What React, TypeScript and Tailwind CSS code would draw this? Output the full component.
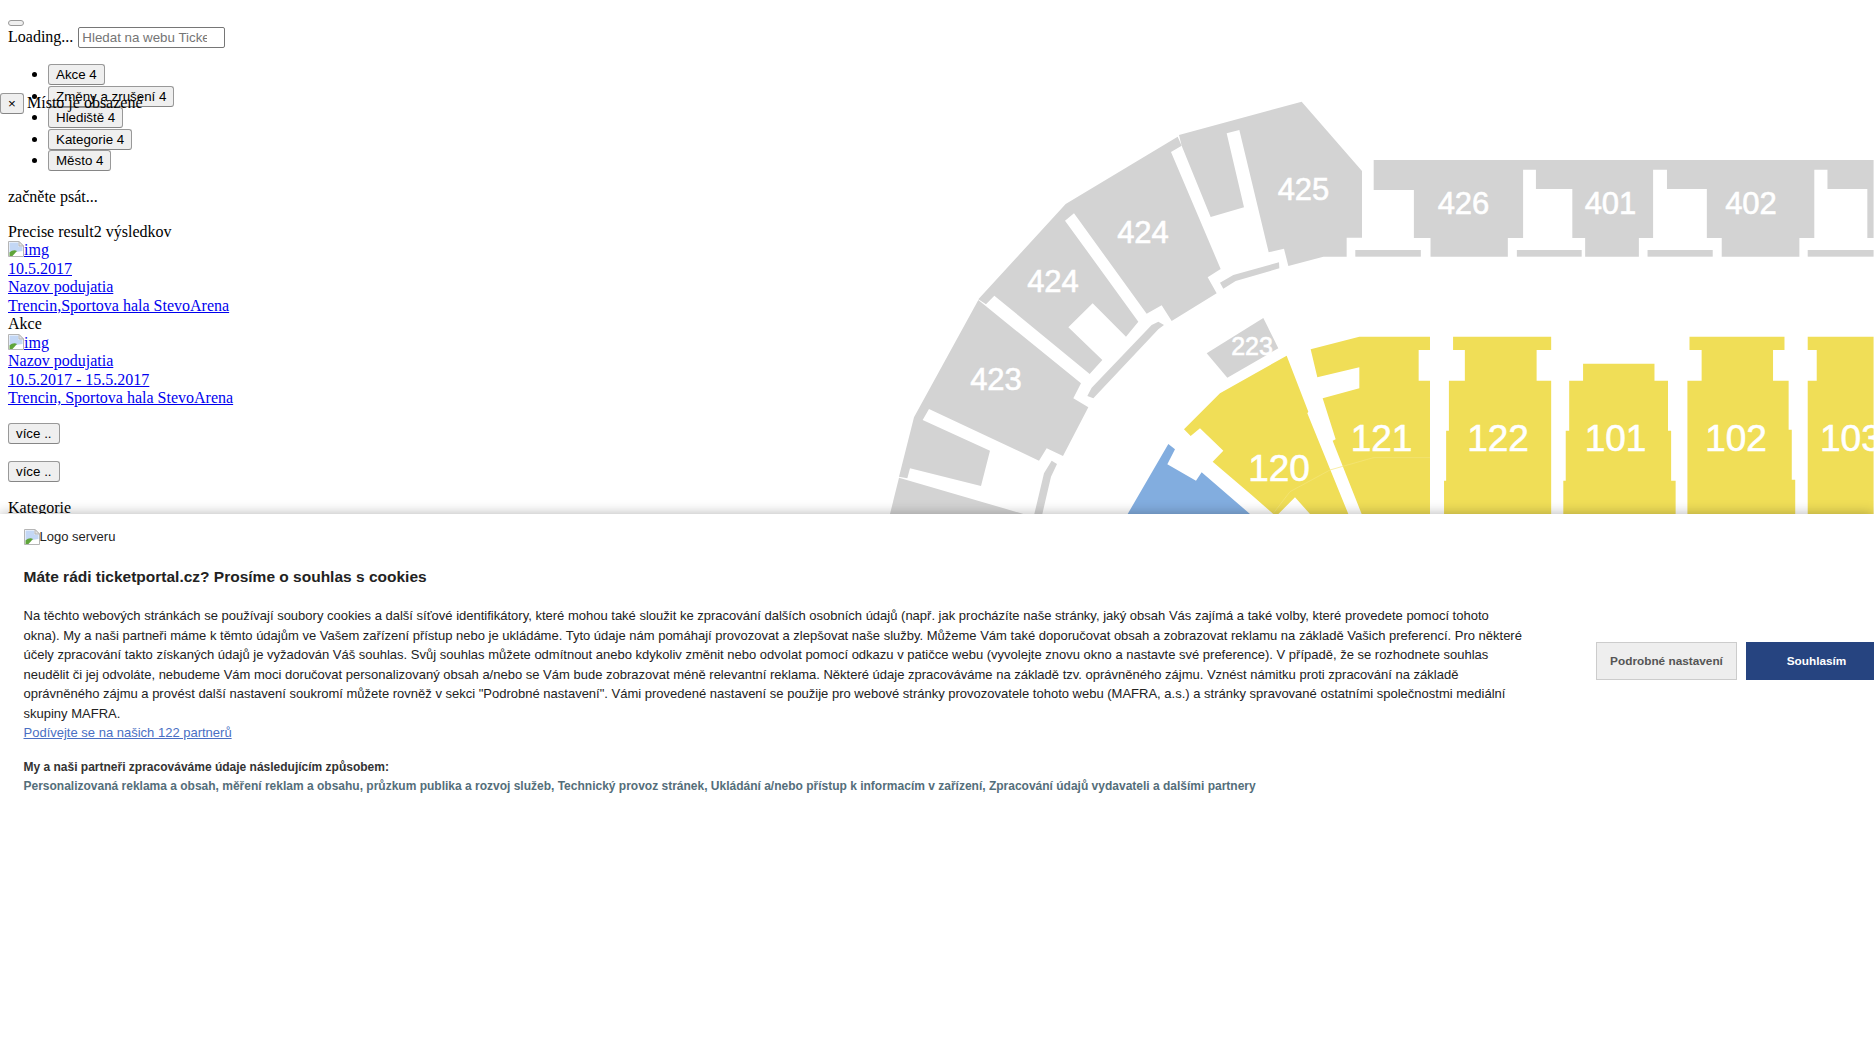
const GRAY = "#d3d3d3";
const YELLOW = "#f0de57";
const BLUE = "#82addf";

const BrokenImg = () => (
  <svg width="16" height="16" viewBox="0 0 16 16" className="inline-block align-top shrink-0">
    <path d="M0.5 0.5H11L15.5 5V15.5H0.5Z" fill="#fff" stroke="#b5b5b5" />
    <path d="M1.5 1.5H10.5V5.5H14.5V10L1.5 12Z" fill="#c3d7f5" />
    <path d="M1.5 15V11.5C4 9 7 8.5 9 10L4.5 15Z" fill="#5fa53a" />
    <path d="M11 0.5V5H15.5Z" fill="#e4e4e4" stroke="#b5b5b5" />
  </svg>
);

const Btn = ({ children, className = "" }: { children: React.ReactNode; className?: string }) => (
  <button className={`block h-[21px] px-[7px] rounded-[3px] border border-[#999999] border-b-[#868686] bg-[#efefef] text-black text-[13.33px] leading-[19px] font-['Liberation_Sans',Arial,sans-serif] whitespace-nowrap ${className}`}>
    {children}
  </button>
);

const Label = ({ x, y, size, children, anchor = "middle" }: { x: number; y: number; size: number; children: string; anchor?: "middle" | "start" }) => (
  <text x={x} y={y} fontSize={size} fill="#fff" stroke="#fff" strokeWidth="0.6" textAnchor={anchor} fontFamily="'Liberation Sans', Arial, sans-serif">
    {children}
  </text>
);

const ArenaMap = () => (
  <svg viewBox="880 90 994 424" className="absolute left-[880px] top-[90px] w-[994px] h-[424px]">
    {/* sections traced from a 3x crop */}
    <g transform="translate(880 90) scale(0.33333)">
      <g fill={GRAY}>
        <polygon points="897,135 1265,35 1446,243 1446,443 1400,443 1400,500 1330,500 1225,528 1212,476 1166,487 1078,120 1040,130 1092,352 992,381 905,167" />
        <polygon points="557,342 893,140 905,167 873,186 1022,537 983,562 1010,610 875,693 845,646 800,671 582,370 555,392 775,695 738,740 638,640 565,712 667,810 629,852 343,617 318,643 295,628" />
        <polygon points="295,630 603,880 580,925 625,952 549,1098 500,1075 477,1112 147,957 128,990 330,1082 303,1188 90,1135 82,1165 57,1160 102,982" />
        <polygon points="57,1163 430,1272 30,1272" />
        <polygon points="1197,517 1060,555 1020,578 1030,596 1067,573 1198,535" />
        <polygon points="835,695 852,705 835,718 640,925 622,918 635,893 815,705" />
        <polygon points="515,1112 531,1122 513,1160 487,1272 463,1272 492,1150" />
        <polygon points="1150,684 1195,775 1042,863 980,790" />
      </g>
      <polygon fill={BLUE} points="865,1062 885,1078 862,1123 948,1172 965,1147 1110,1272 743,1272" />
      <g fill={YELLOW}>
        <polygon points="1020,910 1220,797 1285,965 1282,970 1405,1272 1290,1272 1245,1222 1195,1272 1180,1272 1115,1215 998,1115 1030,1082 960,1015 932,1038 912,1018" />
        <polygon points="1292,778 1438,740 1650,740 1650,780 1616,780 1616,872 1650,872 1650,1272 1445,1272 1358,1052 1367,1048 1328,925 1438,895 1438,832 1312,862" />
      </g>
      <polyline points="1180,1270 1230,1205 1350,1140 1480,1103 1650,1103" fill="none" stroke="#f4e67c" strokeWidth="2" />
    </g>
    <g transform="translate(1330 140) scale(0.34667 0.33333)">
      <g fill={GRAY}>
        <polygon points="126,60 1568,60 1568,294 1550,294 1550,147 1435,147 1435,89 1397,89 1397,294 1354,294 1354,350 1130,350 1130,294 1087,294 1087,147 972,147 972,89 932,89 932,294 891,294 891,350 736,350 736,294 699,294 699,147 594,147 594,89 557,89 557,294 513,294 513,350 290,350 290,294 242,294 242,150 126,150" />
        <rect x="73" y="330" width="189" height="20" />
        <rect x="539" y="330" width="187" height="20" />
        <rect x="916" y="330" width="188" height="20" />
        <rect x="1378" y="330" width="190" height="20" />
      </g>
      <g fill={YELLOW}>
        <polygon points="355,590 638,590 638,630 596,630 596,722 638,722 638,1122 329,1122 329,1022 335,1022 335,872 343,872 343,722 389,722 389,630 355,630" />
        <polygon points="730,671 936,671 936,722 975,722 975,872 984,872 984,1022 997,1022 997,1122 673,1122 673,1022 680,1022 680,872 690,872 690,722 730,722" />
        <polygon points="1037,590 1311,590 1311,630 1278,630 1278,722 1323,722 1323,869 1332,869 1332,1019 1342,1019 1342,1122 1031,1122 1031,722 1072,722 1072,630 1037,630" />
        <polygon points="1378,590 1568,590 1568,1122 1378,1122 1378,722 1404,722 1404,630 1378,630" />
      </g>
    </g>
    <Label x={1303.5} y={200} size={31}>425</Label>
    <Label x={1463.5} y={214} size={31}>426</Label>
    <Label x={1610.5} y={214} size={31}>401</Label>
    <Label x={1751} y={214} size={31}>402</Label>
    <Label x={1143} y={243} size={31}>424</Label>
    <Label x={1053} y={292} size={31}>424</Label>
    <Label x={996} y={390} size={31}>423</Label>
    <Label x={1252} y={355} size={25}>223</Label>
    <Label x={1279} y={481} size={37}>120</Label>
    <Label x={1381.5} y={451} size={37}>121</Label>
    <Label x={1498} y={451} size={37}>122</Label>
    <Label x={1615.5} y={451} size={37}>101</Label>
    <Label x={1736} y={451} size={37}>102</Label>
    <Label x={1820} y={451} size={37} anchor="start">103</Label>
  </svg>
);

const CookieBanner = () => (
  <div className="absolute left-0 right-0 bottom-0 h-[533px] bg-white shadow-[0_0_12px_rgba(0,0,0,0.3)] flex overflow-hidden font-['Liberation_Sans',Arial,sans-serif] text-[#333]">
    <div className="w-[1596px] shrink-0 pl-[23.5px] pt-[15px]">
      <div className="flex items-center h-[16px] text-[13px] text-[#222]">
        <BrokenImg />
        <span>Logo serveru</span>
      </div>
      <h2 className="mt-[20px] text-[15.5px] leading-[24px] font-bold text-[#222] whitespace-nowrap">
        Máte rádi ticketportal.cz? Prosíme o souhlas s cookies
      </h2>
      <p className="mt-[17px] text-[13px] leading-[19.5px] text-[#222] whitespace-nowrap">
        Na těchto webových stránkách se používají soubory cookies a další síťové identifikátory, které mohou také sloužit ke zpracování dalších osobních údajů (např. jak procházíte naše stránky, jaký obsah Vás zajímá a také volby, které provedete pomocí tohoto
        <br />
        okna). My a naši partneři máme k těmto údajům ve Vašem zařízení přístup nebo je ukládáme. Tyto údaje nám pomáhají provozovat a zlepšovat naše služby. Můžeme Vám také doporučovat obsah a zobrazovat reklamu na základě Vašich preferencí. Pro některé
        <br />
        účely zpracování takto získaných údajů je vyžadován Váš souhlas. Svůj souhlas můžete odmítnout anebo kdykoliv změnit nebo odvolat pomocí odkazu v patičce webu (vyvolejte znovu okno a nastavte své preference). V případě, že se rozhodnete souhlas
        <br />
        neudělit či jej odvoláte, nebudeme Vám moci doručovat personalizovaný obsah a/nebo se Vám bude zobrazovat méně relevantní reklama. Některé údaje zpracováváme na základě tzv. oprávněného zájmu. Vznést námitku proti zpracování na základě
        <br />
        oprávněného zájmu a provést další nastavení soukromí můžete rovněž v sekci "Podrobné nastavení". Vámi provedené nastavení se použije pro webové stránky provozovatele tohoto webu (MAFRA, a.s.) a stránky spravované ostatními společnostmi mediální
        <br />
        skupiny MAFRA.
        <br />
        <a className="text-[#4a6fc4] underline">Podívejte se na našich 122 partnerů</a>
      </p>
      <p className="mt-[15px] text-[12px] leading-[19px] font-bold text-[#333]">
        My a naši partneři zpracováváme údaje následujícím způsobem:
      </p>
      <p className="text-[12px] leading-[19.5px] font-bold text-[#546e7a] whitespace-nowrap">
        Personalizovaná reklama a obsah, měření reklam a obsahu, průzkum publika a rozvoj služeb, Technický provoz stránek, Ukládání a/nebo přístup k informacím v zařízení, Zpracování údajů vydavateli a dalšími partnery
      </p>
    </div>
    <div className="flex items-start gap-[9px] pt-[128px] shrink-0">
      <button className="w-[141px] h-[38px] bg-[#eeeeee] border border-[#cccccc] text-[#555] text-[11.8px] font-bold">
        Podrobné nastavení
      </button>
      <button className="w-[141px] h-[38px] bg-[#264480] text-white text-[11.8px] font-bold">
        Souhlasím
      </button>
    </div>
  </div>
);

export default function App() {
  return (
    <div className="relative h-screen overflow-hidden bg-white text-black text-[16px] leading-[18.5px] font-['Liberation_Serif','Times_New_Roman',serif]">
      <ArenaMap />

      <div className="relative px-2 pt-5">
        <button className="block w-4 h-[6px] rounded-[3px] border border-[#999999] bg-[#efefef]" />
        <div className="flex items-center h-[21px] mt-px">
          <span>Loading...</span>
          <input
            className="ml-[5px] w-[147px] h-[21px] border border-[#767676] pl-[3px] pr-[17px] text-[13.33px] font-['Liberation_Sans',Arial,sans-serif] placeholder:text-[#757575] rounded-[2px]"
            placeholder="Hledat na webu Ticketportal"
          />
        </div>

        <ul className="list-disc pl-10 mt-4 flex flex-col gap-[0.5px] [&>li]:h-[21px]">
          <li><Btn>Akce 4</Btn></li>
          <li><Btn>Změny a zrušení 4</Btn></li>
          <li><Btn>Hlediště 4</Btn></li>
          <li><Btn>Kategorie 4</Btn></li>
          <li><Btn>Město 4</Btn></li>
        </ul>

        <p className="mt-[17px]">začněte psát...</p>
        <p className="mt-4">Precise result2 výsledkov</p>
        <div className="[&_a]:text-[#0000ee] [&_a]:underline">
          <div className="h-[18.5px]"><a><BrokenImg />img</a></div>
          <div><a>10.5.2017</a></div>
          <div><a>Nazov podujatia</a></div>
          <div><a>Trencin,Sportova hala StevoArena</a></div>
          <div>Akce</div>
          <div className="h-[18.5px]"><a><BrokenImg />img</a></div>
          <div><a>Nazov podujatia</a></div>
          <div><a>10.5.2017 - 15.5.2017</a></div>
          <div><a>Trencin, Sportova hala StevoArena</a></div>
        </div>
        <Btn className="mt-[15px]">více ..</Btn>
        <Btn className="mt-[17px]">více ..</Btn>
        <p className="mt-[17px]">Kategorie</p>
      </div>

      {/* close button sits over the list */}
      <div className="absolute left-0 top-[93px] flex items-center gap-[3px]">
        <Btn className="w-6 !px-0 text-center">×</Btn>
        <span>Místo je obsazené</span>
      </div>

      <CookieBanner />
    </div>
  );
}
